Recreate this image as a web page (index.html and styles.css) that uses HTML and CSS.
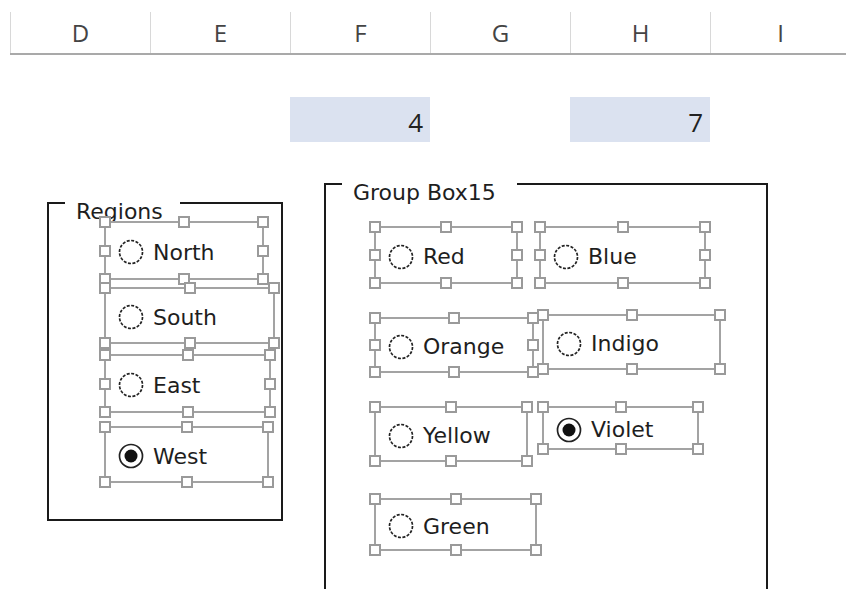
FILE: index.html
```html
<!DOCTYPE html>
<html lang="en">
<head>
  <meta charset="UTF-8">
  <title>Option buttons</title>
  <link rel="stylesheet" href="styles.css">
</head>
<body>
  <div class="sheet">
    <div class="colheads">
      <div class="colhead">D</div>
      <div class="colhead">E</div>
      <div class="colhead">F</div>
      <div class="colhead">G</div>
      <div class="colhead">H</div>
      <div class="colhead">I</div>
    </div>
    <div class="cells">
      <div class="cell"></div>
      <div class="cell"></div>
      <div class="cell linked">4</div>
      <div class="cell"></div>
      <div class="cell linked">7</div>
      <div class="cell"></div>
    </div>

    <!-- group boxes -->
    <div class="groupbox regions"><span class="caption">Regions</span></div>
    <div class="groupbox gb15"><span class="caption">Group Box15</span></div>

    <!-- Regions option buttons -->
    <div class="ctl north">
      <svg class="radio" viewBox="0 0 26 26"><circle class="ring" cx="13" cy="13" r="11.5"/></svg><span class="lbl">North</span>
      <i class="h tl"></i><i class="h tc"></i><i class="h tr"></i>
      <i class="h ml"></i><i class="h mr"></i>
      <i class="h bl"></i><i class="h bc"></i><i class="h br"></i>
    </div>
    <div class="ctl south">
      <svg class="radio" viewBox="0 0 26 26"><circle class="ring" cx="13" cy="13" r="11.5"/></svg><span class="lbl">South</span>
      <i class="h tl"></i><i class="h tc"></i><i class="h tr"></i>
      <i class="h bl"></i><i class="h bc"></i><i class="h br"></i>
    </div>
    <div class="ctl east">
      <svg class="radio" viewBox="0 0 26 26"><circle class="ring" cx="13" cy="13" r="11.5"/></svg><span class="lbl">East</span>
      <i class="h tl"></i><i class="h tc"></i><i class="h tr"></i>
      <i class="h ml"></i><i class="h mr"></i>
      <i class="h bl"></i><i class="h bc"></i><i class="h br"></i>
    </div>
    <div class="ctl west">
      <svg class="radio on" viewBox="0 0 26 26"><circle class="ring" cx="13" cy="13" r="11.5"/><circle class="dot" cx="13" cy="13" r="6.5"/></svg><span class="lbl">West</span>
      <i class="h tl"></i><i class="h tc"></i><i class="h tr"></i>
      <i class="h bl"></i><i class="h bc"></i><i class="h br"></i>
    </div>

    <!-- Group Box 15 option buttons -->
    <div class="ctl red">
      <svg class="radio" viewBox="0 0 26 26"><circle class="ring" cx="13" cy="13" r="11.5"/></svg><span class="lbl">Red</span>
      <i class="h tl"></i><i class="h tc"></i><i class="h tr"></i>
      <i class="h ml"></i><i class="h mr"></i>
      <i class="h bl"></i><i class="h bc"></i><i class="h br"></i>
    </div>
    <div class="ctl blue">
      <svg class="radio" viewBox="0 0 26 26"><circle class="ring" cx="13" cy="13" r="11.5"/></svg><span class="lbl">Blue</span>
      <i class="h tl"></i><i class="h tc"></i><i class="h tr"></i>
      <i class="h ml"></i><i class="h mr"></i>
      <i class="h bl"></i><i class="h bc"></i><i class="h br"></i>
    </div>
    <div class="ctl orange">
      <svg class="radio" viewBox="0 0 26 26"><circle class="ring" cx="13" cy="13" r="11.5"/></svg><span class="lbl">Orange</span>
      <i class="h tl"></i><i class="h tc"></i><i class="h tr"></i>
      <i class="h ml"></i><i class="h mr"></i>
      <i class="h bl"></i><i class="h bc"></i><i class="h br"></i>
    </div>
    <div class="ctl indigo">
      <svg class="radio" viewBox="0 0 26 26"><circle class="ring" cx="13" cy="13" r="11.5"/></svg><span class="lbl">Indigo</span>
      <i class="h tl"></i><i class="h tc"></i><i class="h tr"></i>
      <i class="h bl"></i><i class="h bc"></i><i class="h br"></i>
    </div>
    <div class="ctl yellow">
      <svg class="radio" viewBox="0 0 26 26"><circle class="ring" cx="13" cy="13" r="11.5"/></svg><span class="lbl">Yellow</span>
      <i class="h tl"></i><i class="h tc"></i><i class="h tr"></i>
      <i class="h bl"></i><i class="h bc"></i><i class="h br"></i>
    </div>
    <div class="ctl violet">
      <svg class="radio on" viewBox="0 0 26 26"><circle class="ring" cx="13" cy="13" r="11.5"/><circle class="dot" cx="13" cy="13" r="6.5"/></svg><span class="lbl">Violet</span>
      <i class="h tl"></i><i class="h tc"></i><i class="h tr"></i>
      <i class="h bl"></i><i class="h bc"></i><i class="h br"></i>
    </div>
    <div class="ctl green">
      <svg class="radio" viewBox="0 0 26 26"><circle class="ring" cx="13" cy="13" r="11.5"/></svg><span class="lbl">Green</span>
      <i class="h tl"></i><i class="h tc"></i><i class="h tr"></i>
      <i class="h bl"></i><i class="h bc"></i><i class="h br"></i>
    </div>
  </div>
</body>
</html>
```
FILE: styles.css
```css
body {
  margin: 0;
  background: #fff;
  overflow: hidden;
}
.sheet {
  position: relative;
  width: 846px;
  height: 589px;
  overflow: hidden;
  font-family: "DejaVu Sans", sans-serif;
  color: #1e1e1e;
}

/* column headers */
.colheads {
  display: flex;
  margin: 12px 0 0 10px;
  height: 41px;
  border-bottom: 2px solid #a9a9a9;
}
.colhead {
  flex: none;
  width: 140px;
  box-sizing: border-box;
  border-left: 1px solid #d8d8d8;
  display: flex;
  align-items: center;
  justify-content: center;
  font: 24px "Open Sans", sans-serif;
  color: #444;
}

/* linked cells */
.cells {
  display: flex;
  margin: 42px 0 0 10px;
  height: 45px;
}
.cell {
  flex: none;
  width: 140px;
  box-sizing: border-box;
}
.cell.linked {
  background: #dbe2f0;
  display: flex;
  justify-content: flex-end;
  align-items: flex-end;
  padding: 0 7px 7px 0;
  font: 26px/26px "Open Sans", sans-serif;
  color: #222;
}

/* group boxes */
.groupbox {
  position: absolute;
  box-sizing: border-box;
  border: 2px solid #1a1a1a;
}
.regions { left: 47px; top: 202px; width: 236px; height: 319px; }
.gb15 { left: 324px; top: 183px; width: 444px; height: 430px; }
.caption {
  position: absolute;
  left: 16px;
  top: -5px;
  background: #fff;
  padding: 0 17px 0 11px;
  font-size: 22px;
  line-height: 26px;
  white-space: nowrap;
}
.gb15 .caption { padding-right: 21px; }

/* option buttons in design mode */
.ctl {
  position: absolute;
  box-sizing: border-box;
  border: 2px solid #a3a3a3;
  display: flex;
  align-items: center;
  padding: 3px 0 0 12px;
  font-size: 22px;
  white-space: nowrap;
}
.north  { left: 104px; top: 221px; width: 160px; height: 59px; }
.south  { left: 104px; top: 287px; width: 171px; height: 57px; }
.east   { left: 104px; top: 354px; width: 167px; height: 59px; }
.west   { left: 104px; top: 426px; width: 165px; height: 57px; }
.red    { left: 374px; top: 226px; width: 144px; height: 58px; }
.blue   { left: 539px; top: 226px; width: 167px; height: 58px; }
.orange { left: 374px; top: 317px; width: 160px; height: 56px; }
.indigo { left: 542px; top: 314px; width: 179px; height: 56px; }
.yellow { left: 374px; top: 406px; width: 154px; height: 56px; }
.violet { left: 542px; top: 406px; width: 157px; height: 44px; }
.green  { left: 374px; top: 498px; width: 163px; height: 53px; }

.radio {
  flex: none;
  width: 26px;
  height: 26px;
  margin-right: 9px;
}
.ring {
  fill: none;
  stroke: #222;
  stroke-width: 1.7;
  stroke-dasharray: 3 1.5;
}
.on .ring { stroke-dasharray: none; }
.dot { fill: #111; }

/* sizing handles */
.h {
  position: absolute;
  width: 12px;
  height: 12px;
  box-sizing: border-box;
  border: 2px solid #9a9a9a;
  background: #fff;
}
.tl { left: -7px; top: -7px; }
.tc { left: calc(50% - 6px); top: -7px; }
.tr { right: -7px; top: -7px; }
.ml { left: -7px; top: calc(50% - 6px); }
.mr { right: -7px; top: calc(50% - 6px); }
.bl { left: -7px; bottom: -7px; }
.bc { left: calc(50% - 6px); bottom: -7px; }
.br { right: -7px; bottom: -7px; }
```
